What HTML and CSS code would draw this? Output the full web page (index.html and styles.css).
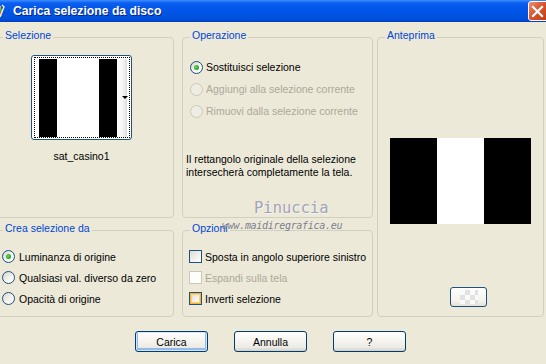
FILE: index.html
```html
<!DOCTYPE html>
<html lang="it">
<head>
    <meta charset="UTF-8">
    <title>Carica selezione da disco</title>
    <link rel="stylesheet" href="styles.css">
</head>
<body>
    <div class="window">
        <div class="titlebar">
            <svg class="app-icon" width="8" height="16" viewBox="0 0 8 16">
                <rect x="0" y="3" width="3" height="4" fill="#e8a33a"/>
                <rect x="2" y="6" width="3" height="3" fill="#4fae3c"/>
                <rect x="0" y="9" width="4" height="4" fill="#d9482b"/>
                <path d="M4 2 L6 4 L2 14" stroke="#f4f0e0" stroke-width="1.4" fill="none"/>
            </svg>
            <span class="title">Carica selezione da disco</span>
            <span class="close">
                <svg width="13" height="13" viewBox="0 0 13 13">
                    <path d="M2 2 L11 11 M11 2 L2 11" stroke="#fff" stroke-width="2.2" stroke-linecap="square"/>
                </svg>
            </span>
        </div>

        <div class="content">
            <div class="groups">
                <section class="group sel">
                    <span class="legend">Selezione</span>
                    <div class="thumb">
                        <div class="focus">
                            <div class="strip">
                                <span class="blk"></span><span class="wht"></span><span class="blk"></span><span class="fade"></span>
                            </div>
                        </div>
                        <span class="arrow"></span>
                    </div>
                    <div class="thumb-name">sat_casino1</div>
                </section>

                <section class="group op">
                    <span class="legend">Operazione</span>
                    <div class="options op-list">
                        <div class="row"><span class="radio on"></span>Sostituisci selezione</div>
                        <div class="row disabled"><span class="radio"></span>Aggiungi alla selezione corrente</div>
                        <div class="row disabled"><span class="radio"></span>Rimuovi dalla selezione corrente</div>
                    </div>
                    <p class="note">Il rettangolo originale della selezione<br>intersecherà completamente la tela.</p>
                </section>

                <section class="group preview">
                    <span class="legend">Anteprima</span>
                    <div class="preview-img">
                        <span class="blk"></span><span class="wht"></span><span class="blk"></span>
                    </div>
                    <div class="bg-btn"><span class="checker"></span></div>
                </section>

                <section class="group crea">
                    <span class="legend">Crea selezione da</span>
                    <div class="options low">
                        <div class="row"><span class="radio on"></span>Luminanza di origine</div>
                        <div class="row"><span class="radio"></span>Qualsiasi val. diverso da zero</div>
                        <div class="row"><span class="radio"></span>Opacità di origine</div>
                    </div>
                </section>

                <section class="group opz">
                    <span class="legend">Opzioni</span>
                    <div class="options low">
                        <div class="row"><span class="check"></span>Sposta in angolo superiore sinistro</div>
                        <div class="row disabled"><span class="check"></span>Espandi sulla tela</div>
                        <div class="row"><span class="check hot"></span>Inverti selezione</div>
                    </div>
                </section>
            </div>

            <div class="buttons">
                <button class="default">Carica</button>
                <button>Annulla</button>
                <button>?</button>
            </div>

            <div class="watermark">
                <div class="wm-name">Pinuccia</div>
                <div class="wm-url">www.maidiregrafica.eu</div>
            </div>
        </div>
    </div>
</body>
</html>
```

FILE: styles.css
```css
body {
    margin: 0;
    background-color: #ece9d8;
    font-family: "Liberation Sans", Arial, sans-serif;
    font-size: 10.5px;
    color: #000;
    overflow: hidden;
}
.window {
    width: 546px;
    height: 364px;
    overflow: hidden;
}
.titlebar {
    height: 22px;
    display: flex;
    align-items: center;
    background: linear-gradient(#3d8eff 0, #0b5ff0 3px, #0055e6 50%, #0050dc 85%, #0040c6 100%);
}
.app-icon {
    margin-left: -2px;
    flex: none;
}
.title {
    margin-left: 7px;
    color: #fff;
    font-weight: bold;
    font-size: 12.2px;
    text-shadow: 1px 1px 0 #0a248a;
    flex: 1;
}
.close {
    width: 21px;
    height: 20px;
    margin-right: -3px;
    box-sizing: border-box;
    border: 1px solid #fff;
    border-radius: 3px;
    background: linear-gradient(135deg, #ec8f6e 0%, #d9552f 45%, #c2380f 100%);
    display: flex;
    align-items: center;
    justify-content: center;
    padding-right: 2px;
}
.content {
    position: relative;
    height: 342px;
}
.groups {
    display: grid;
    grid-template-columns: 179px 8px 191px 4px 167px;
    grid-template-rows: 181px 87px;
    row-gap: 12px;
    margin-left: -5px;
    padding-top: 15px;
}
.group {
    border: 1px solid #d0d0bf;
    border-radius: 4px;
    box-sizing: border-box;
}
.legend {
    display: table;
    margin: -9px 0 0 7px;
    padding: 0 2px;
    line-height: 13px;
    color: #0046d5;
    background-color: #ece9d8;
}
.sel { grid-column: 1; grid-row: 1; }
.op { grid-column: 3; grid-row: 1; }
.preview { grid-column: 5; grid-row: 1 / span 2; }
.crea { grid-column: 1; grid-row: 2; }
.opz { grid-column: 3; grid-row: 2; }

/* thumbnail of the selection */
.thumb {
    position: relative;
    width: 101px;
    height: 85px;
    margin: 13px 0 0 35px;
    box-sizing: border-box;
    border: 1px solid #1c5180;
    border-radius: 3px;
    background-color: #fff;
    padding: 1px 1px 1px 2px;
}
.focus {
    height: 100%;
    box-sizing: border-box;
    border: 1px dotted #000;
    padding: 1px 0 0 4px;
}
.strip {
    display: flex;
    height: 78px;
}
.strip .blk { width: 18px; background-color: #000; }
.strip .wht { width: 42px; background-color: #fff; }
.strip .fade { width: 10px; background: linear-gradient(90deg, #fff, #f4f4f4 60%, #dcdcdc); }
.arrow {
    position: absolute;
    right: 3px;
    top: 40px;
    border-left: 3px solid transparent;
    border-right: 3px solid transparent;
    border-top: 3px solid #000;
}
.thumb-name {
    width: 101px;
    margin: 10px 0 0 35px;
    text-align: center;
    line-height: 13px;
}

/* radios and checks */
.options {
    display: flex;
    flex-direction: column;
}
.op-list {
    margin: 14px 0 0 7px;
}
.op-list .row {
    height: 22px;
}
.low {
    margin: 11px 0 0 6px;
}
.low .row {
    height: 21px;
}
.row {
    display: flex;
    align-items: center;
    white-space: nowrap;
}
.row.disabled {
    color: #aca899;
}
.radio {
    position: relative;
    width: 13px;
    height: 13px;
    box-sizing: border-box;
    margin-right: 4px;
    border: 1px solid #1c5180;
    border-radius: 50%;
    background: linear-gradient(135deg, #d8d6cc, #f6f5f0 60%, #fff);
    flex: none;
}
.op-list .radio {
    margin-right: 3px;
}
.disabled .radio {
    border-color: #cac8bb;
    background: #efede3;
}
.radio.on::after {
    content: "";
    position: absolute;
    left: 3px;
    top: 3px;
    width: 5px;
    height: 5px;
    border-radius: 50%;
    background: radial-gradient(circle at 40% 40%, #67d65e, #21a121 70%);
}
.check {
    width: 13px;
    height: 13px;
    box-sizing: border-box;
    margin-right: 3px;
    border: 1px solid #1c5180;
    background: linear-gradient(135deg, #dcdbd4, #f3f2ec 60%, #fff);
    flex: none;
}
.disabled .check {
    border-color: #cac8bb;
    background: #fdfdfb;
}
.check.hot {
    box-shadow: inset 0 0 0 1px #f8b330, inset 0 0 0 2px #fcd27a;
}
.note {
    margin: 31px 0 0 3px;
    line-height: 13px;
}

/* preview */
.preview-img {
    display: flex;
    width: 141px;
    height: 86px;
    margin: 96px 0 0 12px;
}
.preview-img span { width: 47px; }
.preview-img .blk { background-color: #000; }
.preview-img .wht { background-color: #fff; }
.bg-btn {
    width: 37px;
    height: 20px;
    box-sizing: border-box;
    margin: 63px 0 0 72px;
    border: 1px solid #1c5180;
    border-radius: 3px;
    background: linear-gradient(#fff, #f4f3ee 70%, #e3e0d6);
    display: flex;
    align-items: center;
    justify-content: center;
}
.checker {
    width: 18px;
    height: 14px;
    background-color: #fafafa;
    background-image:
        linear-gradient(45deg, #e2e2e2 25%, transparent 25%, transparent 75%, #e2e2e2 75%),
        linear-gradient(45deg, #e2e2e2 25%, transparent 25%, transparent 75%, #e2e2e2 75%);
    background-size: 10px 10px;
    background-position: 0 0, 5px 5px;
}

/* dialog buttons */
.buttons {
    display: flex;
    justify-content: center;
    gap: 26px;
    margin-top: 14px;
    padding-right: 5px;
}
button {
    width: 73px;
    height: 21px;
    padding: 0;
    font-family: "Liberation Sans", Arial, sans-serif;
    font-size: 10.5px;
    color: #000;
    border: 1px solid #003c74;
    border-radius: 3px;
    background: linear-gradient(#fff 0, #f6f5f1 40%, #ecebe5 80%, #d6d0c5 100%);
}
button.default {
    box-shadow: inset 0 0 0 1px #cee7ff, inset 0 -1px 0 2px #98b8ea;
}

/* watermark drawn over the dialog */
.watermark {
    position: absolute;
    left: 222px;
    top: 177px;
    text-align: center;
    pointer-events: none;
}
.wm-name {
    font-family: "DejaVu Sans Mono", monospace;
    font-size: 15.5px;
    color: #a4a4b8;
    text-shadow: 1px 1px 0 #f6f5f0;
    margin-left: 32px;
    line-height: 18px;
    text-align: left;
}
.wm-url {
    font-family: "DejaVu Sans Mono", monospace;
    font-style: oblique;
    font-size: 10px;
    letter-spacing: -0.3px;
    color: #7e7e90;
    line-height: 12px;
    margin-top: 3px;
}
```
